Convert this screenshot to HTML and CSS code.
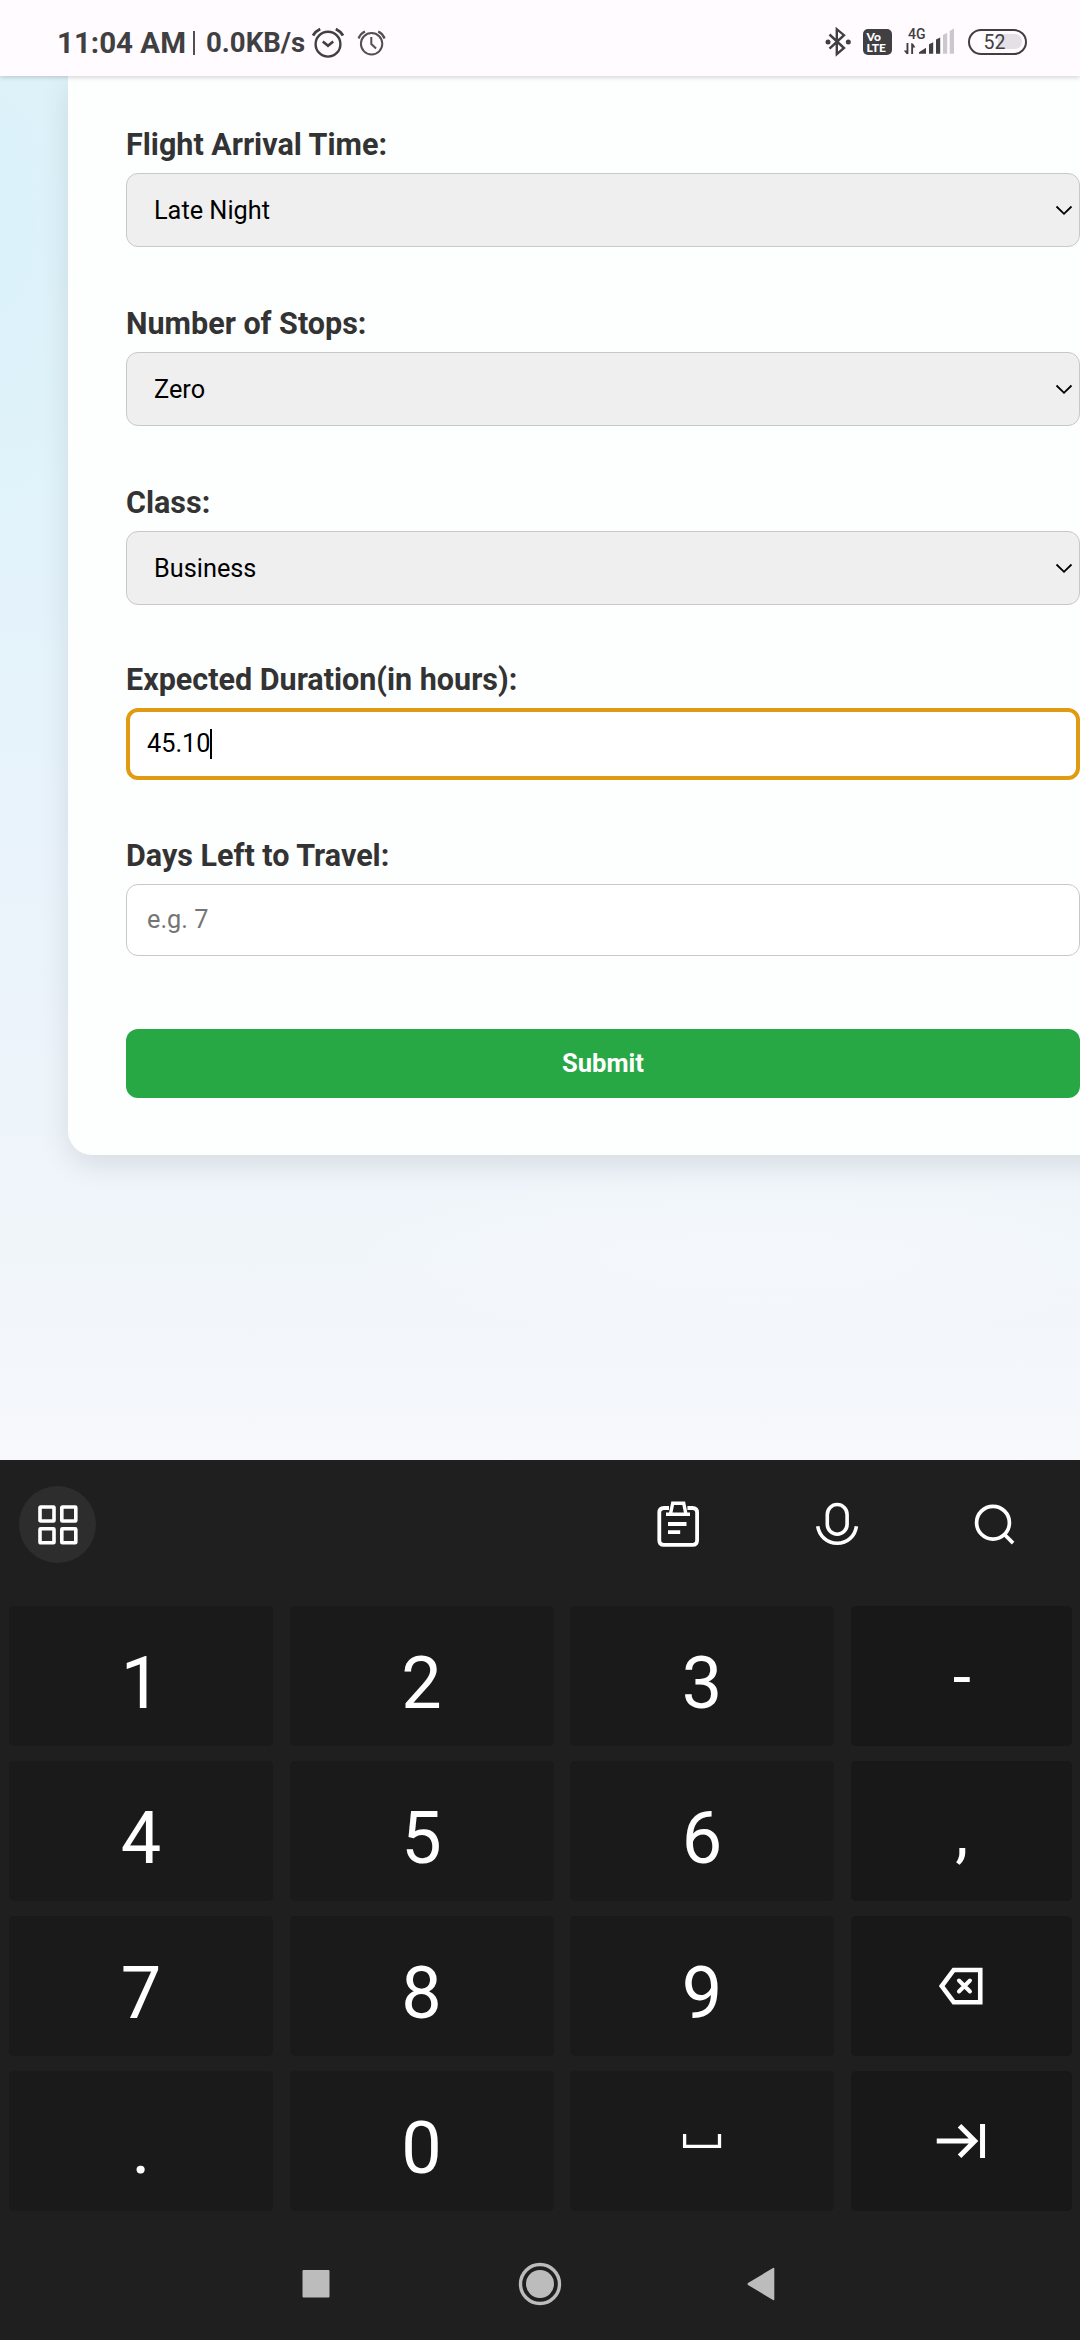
FILE: index.html
```html
<!DOCTYPE html>
<html lang="en">
<head>
<meta charset="utf-8">
<title>Flight Price</title>
<link rel="stylesheet" href="styles.css">
</head>
<body>
<header class="status">
  <div class="status-left">
    <span class="clock">11:04 AM</span>
    <span class="divider"></span>
    <span class="speed">0.0KB/s</span>
    <svg class="alarm-a" width="32" height="32" viewBox="312 27 32 32" fill="none" stroke="#404042">
      <circle cx="328" cy="44.200" r="12.400" stroke-width="2.400"/>
      <path d="M322.800 41.500l5.200 4.300 5.200-4.300" stroke-width="2.600"/>
      <path d="M313 35.500q2.500-4.200 7.200-6.500M343 35.500q-2.500-4.200-7.200-6.500" stroke-width="2.800"/>
    </svg>
    <svg class="alarm-b" width="30" height="30" viewBox="357 27 30 30" fill="none" stroke="#505053">
      <circle cx="371.600" cy="42.800" r="10.700" stroke-width="2"/>
      <path d="M371.300 36v7l4.800 4.500" stroke-width="2"/>
      <path d="M358.600 37.500q1.800-4.800 6.400-7M384.600 37.500q-1.800-4.800-6.400-7" stroke-width="2.200"/>
    </svg>
  </div>
  <div class="status-right">
    <svg width="27" height="32" viewBox="825 27 27 32" fill="none" stroke="#404042" stroke-width="2.400">
      <path d="M829.500 35.500l14.500 13.500-7.200 6.200V30.200l7.200 6-14.500 13.500"/>
      <circle cx="828" cy="43" r="2.500" fill="#404042" stroke="none"/><circle cx="848.300" cy="43" r="2.500" fill="#404042" stroke="none"/>
    </svg>
    <div class="volte"><span>Vo</span><span>LTE</span></div>
    <div class="network">
      <span class="gen">4G</span>
      <svg width="52" height="28" viewBox="903 28 52 28" fill="#404042">
        <path d="M906.500 43h1.900v11h-1.900l-2.700-3.500h2.700zM911.200 54h1.900v-6.500h2.300l-2.300-3.800-1.900-.7z"/>
        <path d="M919 53.700v-1.500l7-4.500v6zM929 53.700v-9.400l4.200-2v11.400zM936 53.700V39.600l4.200-2v16.100z"/>
        <path d="M943 53.700V35l4.200-2.200v20.900zM949.700 53.700V31l4.300-2.600v25.300z" fill="#cbc7cc"/>
      </svg>
    </div>
    <div class="battery"><span class="level"></span><span class="percent">52</span></div>
  </div>
</header>

<main class="page">
  <form class="card">
    <div class="field">
      <span class="label">Flight Arrival Time:</span>
      <div class="select"><span>Late Night</span><svg width="18" height="12" viewBox="0 0 18 12" fill="none" stroke="#000" stroke-width="1.800"><path d="M1.500 1.500L9 8.800l7.500-7.300"/></svg></div>
    </div>
    <div class="field">
      <span class="label">Number of Stops:</span>
      <div class="select"><span>Zero</span><svg width="18" height="12" viewBox="0 0 18 12" fill="none" stroke="#000" stroke-width="1.800"><path d="M1.500 1.500L9 8.800l7.500-7.300"/></svg></div>
    </div>
    <div class="field">
      <span class="label">Class:</span>
      <div class="select"><span>Business</span><svg width="18" height="12" viewBox="0 0 18 12" fill="none" stroke="#000" stroke-width="1.800"><path d="M1.500 1.500L9 8.800l7.500-7.300"/></svg></div>
    </div>
    <div class="field">
      <span class="label">Expected Duration(in hours):</span>
      <div class="input focused"><span>45.10</span><i class="caret"></i></div>
    </div>
    <div class="field">
      <span class="label">Days Left to Travel:</span>
      <div class="input"><span class="placeholder">e.g. 7</span></div>
    </div>
    <div class="submit">Submit</div>
  </form>
</main>

<section class="keyboard">
  <div class="toolbar">
    <div class="menu">
      <svg width="40" height="40" viewBox="0 0 40 40" fill="none" stroke="#fff" stroke-width="3.600">
        <rect x="2" y="2" width="14" height="14" rx=".6"/><rect x="23.800" y="2" width="14" height="14" rx=".6"/>
        <rect x="2" y="23.800" width="14" height="14" rx=".6"/><rect x="23.800" y="23.800" width="14" height="14" rx=".6"/>
      </svg>
    </div>
    <div class="tools">
      <svg width="48" height="52" viewBox="654 1498 48 52" fill="none" stroke="#fff" stroke-width="3.800">
        <path d="M669 1508h-5q-4.700 0-4.700 4.700v27.500q0 4.700 4.700 4.700h28.400q4.700 0 4.700-4.700v-27.500q0-4.700-4.700-4.700h-5"/>
        <path d="M666 1514.200h24M670.500 1514l2.200-10.800h11l2.200 10.800" stroke-width="3.400"/>
        <path d="M668 1524h18.500M668 1532.200h12.200"/>
      </svg>
      <svg width="48" height="52" viewBox="812 1498 48 52" fill="none" stroke="#fff" stroke-width="3.600">
        <rect x="826.300" y="1504.500" width="19.800" height="29.700" rx="9.900"/>
        <path d="M816.700 1526.300C818.200 1536 826 1543.300 836.200 1543.300S854.200 1536 855.400 1526.300"/>
      </svg>
      <svg width="48" height="52" viewBox="971 1498 48 52" fill="none" stroke="#fff" stroke-width="3.700">
        <circle cx="993" cy="1522.700" r="16.400"/><path d="M1004.500 1534.500l8.600 8.600"/>
      </svg>
    </div>
  </div>
  <div class="keys">
    <div class="key">1</div><div class="key">2</div><div class="key">3</div><div class="key side dash">-</div>
    <div class="key">4</div><div class="key">5</div><div class="key">6</div><div class="key side comma">,</div>
    <div class="key">7</div><div class="key">8</div><div class="key">9</div>
    <div class="key side icon">
      <svg width="222" height="140" viewBox="850.500 1916 221.500 140" fill="none" stroke="#fff" stroke-width="4.600">
        <path d="M954 1970h26.500v32.200H954l-12-16.100z"/>
        <path d="M959.200 1980.500l11 11M970.200 1980.500l-11 11" stroke-width="4" stroke-linecap="round"/>
      </svg>
    </div>
    <div class="key">.</div><div class="key">0</div>
    <div class="key icon">
      <svg width="264" height="140" viewBox="570 2071 264 140" fill="none" stroke="#fff" stroke-width="3.300"><path d="M684.600 2134v12.300h34.900V2134"/></svg>
    </div>
    <div class="key side icon">
      <svg width="222" height="140" viewBox="850.500 2071 221.500 140" fill="none" stroke="#fff" stroke-width="5"><path d="M937 2141h38M959.800 2125.800l15.200 15.200-15.200 15.200M982.800 2124v34"/></svg>
    </div>
  </div>
  <nav class="nav">
    <svg width="28" height="34" viewBox="0 0 28 34" fill="#bcbcbc"><rect x=".5" y="3" width="27" height="27.500" rx="1"/></svg>
    <svg width="44" height="44" viewBox="0 0 44 44"><circle cx="22" cy="22" r="19.500" fill="none" stroke="#bcbcbc" stroke-width="3.400"/><circle cx="22" cy="22" r="14" fill="#bcbcbc"/></svg>
    <svg class="back" width="28" height="34" viewBox="0 0 28 34" fill="#bcbcbc"><path d="M1 16q-1 1 0 2l25 15q1.300.6 1.300-.8V1.800q0-1.400-1.300-.8z"/></svg>
  </nav>
</section>
</body>
</html>
```
FILE: styles.css
```css
* { box-sizing: border-box; }
body {
  margin: 0;
  width: 1080px;
  height: 2340px;
  display: flex;
  flex-direction: column;
  overflow: hidden;
  font-family: Roboto, "Liberation Sans", sans-serif;
}
svg { display: block; flex: none; }

/* status bar */
.status {
  height: 76px;
  flex: none;
  display: flex;
  justify-content: space-between;
  padding: 5px 53px 0 57px;
  background: #fffbff;
  color: #404042;
  box-shadow: 0 1px 5px rgba(0, 0, 0, .2);
  z-index: 1;
}
.status-left, .status-right { display: flex; align-items: center; height: 76px; }
.status-left { height: 75px; font-weight: 700; }
.status-right { height: 74px; }
.clock { font-size: 29.500px; width: 136px; white-space: nowrap; }
.divider { width: 2px; height: 24px; background: #505052; margin-right: 11px; }
.speed { font-size: 27.600px; width: 106px; white-space: nowrap; }
.alarm-b { margin-left: 13px; }
.volte {
  width: 29px;
  height: 26px;
  margin-left: 11px;
  padding-top: 2px;
  border-radius: 5px;
  background: #404042;
  color: #fff;
  display: flex;
  flex-direction: column;
  font: 900 12px/11px Lato, sans-serif;
}
.volte span { padding-left: 3.500px; }
.network { margin-left: 11px; position: relative; }
.gen { position: absolute; left: 5px; top: -2.500px; font-size: 14px; line-height: 16px; font-weight: 500; }
.battery {
  width: 59px;
  height: 26px;
  margin-left: 13px;
  border: 2.500px solid #404042;
  border-radius: 13px;
  position: relative;
  display: flex;
  align-items: center;
}
.level { position: absolute; right: 3px; top: 3px; width: 24px; height: 15px; background: #e4e0e5; border-radius: 0 7px 7px 0; }
.percent { position: relative; margin-left: 13.500px; font-size: 19.500px; line-height: 20px; padding-top: 2px; }

/* web page */
.page {
  height: 1384px;
  flex: none;
  overflow: hidden;
  background:
    radial-gradient(ellipse 420px 90px at 760px 1180px, rgba(246, 249, 253, .8), transparent),
    radial-gradient(ellipse 120px 300px at 0 150px, rgba(214, 241, 249, .5), transparent),
    linear-gradient(180deg, #dff2f9 0, #e1f3fb 400px, #eaf3fb 800px, #eff5fa 1100px, #f2f6fb 1250px, #f7f9fc 1384px);
}
.card {
  width: 1078px;
  height: 1079px;
  margin-left: 68px;
  padding: 50px 67px 0 58px;
  border-radius: 0 0 24px 24px;
  background: #fdfefe;
  box-shadow: 0 10px 30px rgba(0, 0, 0, .1);
}
.field { display: flex; flex-direction: column; height: 179px; }
.label { height: 47px; flex: none; line-height: 37px; font-size: 30.500px; font-weight: 700; color: #333; }
.field:nth-child(4) { height: 176px; }
.field:nth-child(5) { height: 190px; }
.field:nth-child(4) .label, .field:nth-child(5) .label { height: 45px; line-height: 34px; }
.select {
  width: 954px;
  height: 74px;
  display: flex;
  align-items: center;
  justify-content: space-between;
  padding: 0 6px 0 27px;
  border: 1.500px solid #c8c8c8;
  border-radius: 12px;
  background: #efefef;
}
.select svg { margin-top: 2px; }
.select, .input { font-size: 25.300px; color: #000; }
.input {
  width: 954px;
  height: 72px;
  display: flex;
  align-items: center;
  padding: 0 20px 1px;
  border: 1.500px solid #c8c8c8;
  border-radius: 12px;
  background: #fff;
}
.input.focused { border: 4px solid #e09b12; padding: 0 17px 1px; }
.caret { width: 2px; height: 30px; margin-left: -1px; background: #000; }
.placeholder { color: #757575; }
.submit {
  width: 954px;
  height: 69px;
  border-radius: 12px;
  background: #28a745;
  color: #fff;
  font-size: 25.500px;
  font-weight: 700;
  line-height: 68px;
  text-align: center;
}

/* keyboard */
.keyboard { flex: 1; background: #1f1f1f; color: #fff; display: flex; flex-direction: column; }
.toolbar { height: 146px; display: flex; justify-content: space-between; padding: 26px 61px 0 19px; }
.menu { width: 77px; height: 77px; border-radius: 50%; background: #2d2d2d; display: flex; align-items: center; justify-content: center; }
.tools { display: flex; gap: 110.500px; padding-top: 12px; }
.keys {
  display: grid;
  grid-template-columns: repeat(3, 264px) 221.500px;
  grid-auto-rows: 140px;
  column-gap: 16.500px;
  row-gap: 15px;
  padding-left: 9px;
}
.key { display: flex; align-items: center; justify-content: center; padding-top: 15px; border-radius: 5px; background: #1a1a1a; font-size: 72px; }
.key.side { background: #181818; }
.key.icon { padding: 0; }
.key.dash, .key.comma { font-size: 66px; padding: 3px 0 0 1px; }
.nav { display: flex; align-items: center; gap: 188px; height: 129px; padding: 16px 0 0 302px; }
.back { margin-left: -3px; }
```
